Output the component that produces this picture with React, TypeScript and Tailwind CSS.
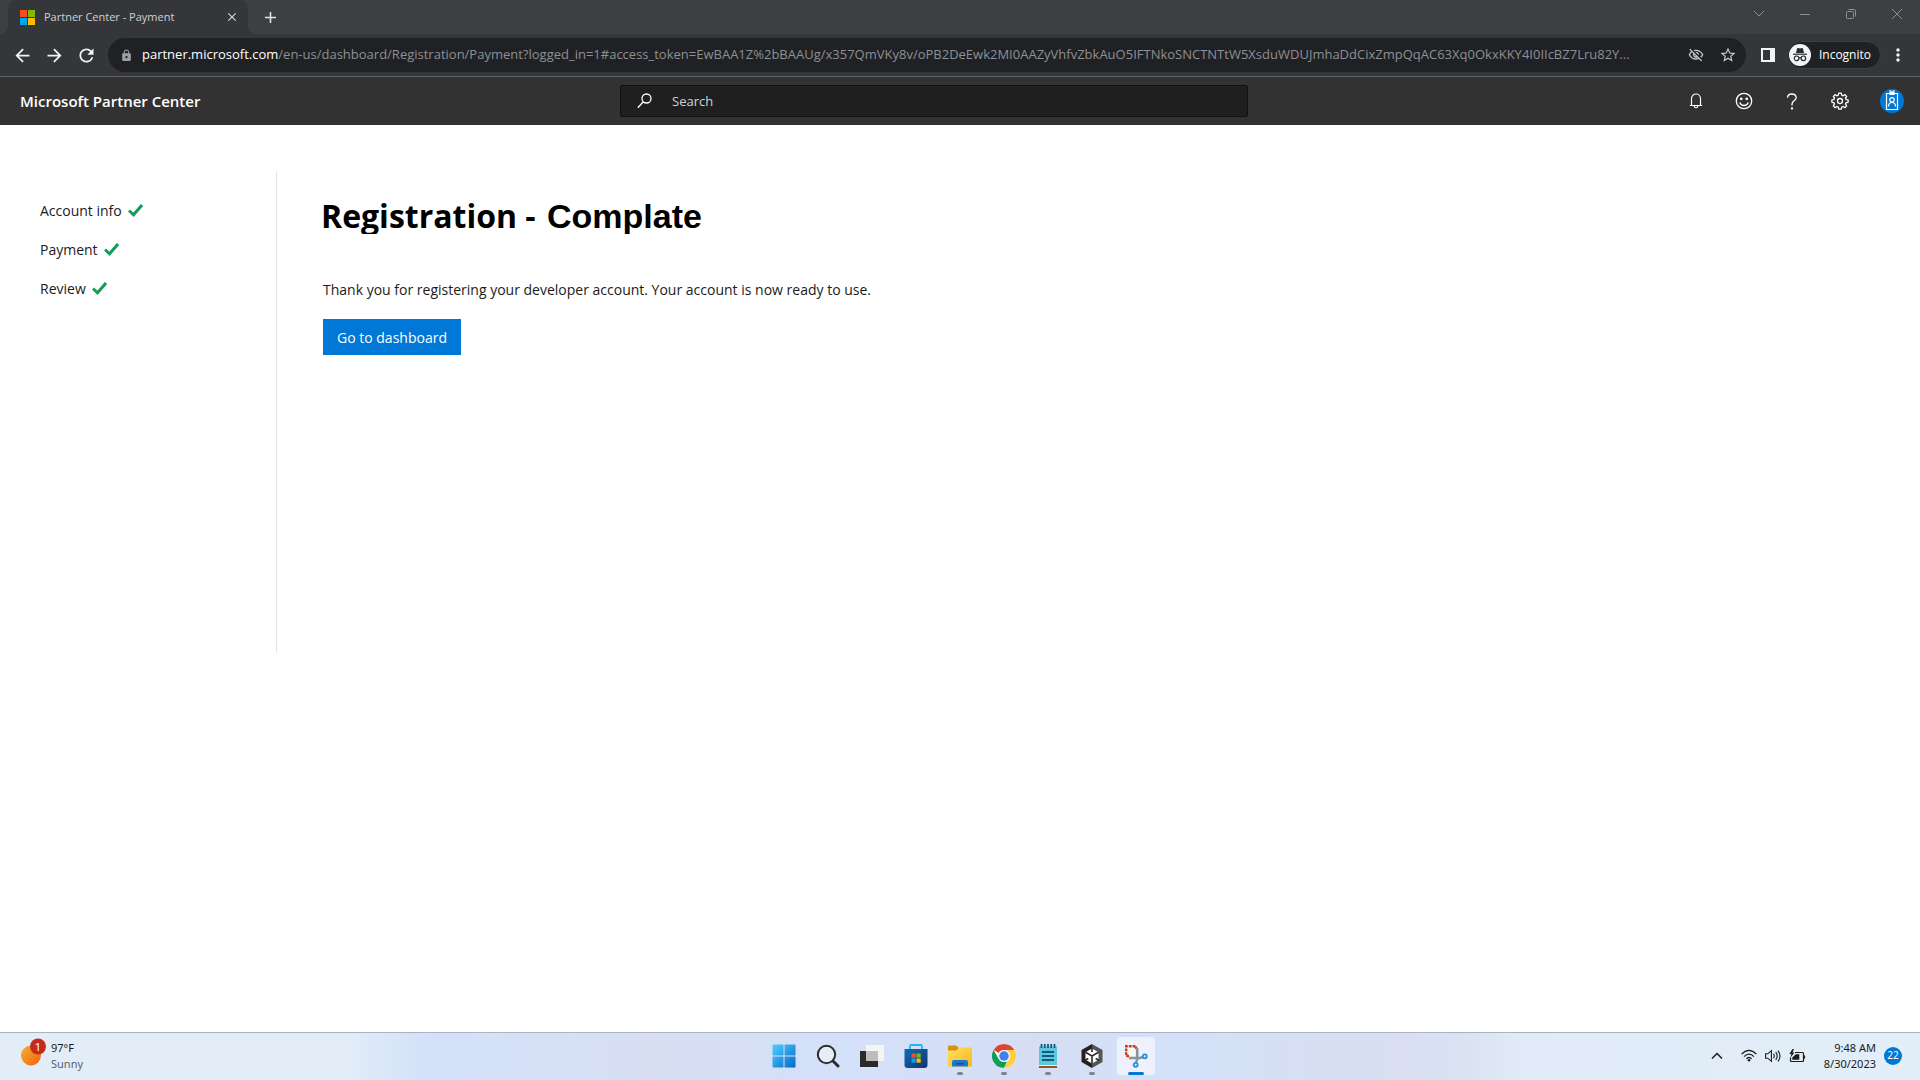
import React from "react";
import {
  MdArrowBack,
  MdArrowForward,
  MdRefresh,
  MdLock,
  MdOutlineVisibilityOff,
  MdStarBorder,
  MdMoreVert,
  MdAdd,
  MdClose,
} from "react-icons/md";

const URL_HOST = "partner.microsoft.com";
const URL_REST =
  "/en-us/dashboard/Registration/Payment?logged_in=1#access_token=EwBAA1Z%2bBAAUg/x357QmVKy8v/oPB2DeEwk2MI0AAZyVhfvZbkAuO5IFTNkoSNCTNTtW5XsduWDUJmhaDdCixZmpQqAC63Xq0OkxKKY4I0IIcBZ7Lru82Y...";

function IconButton({ label, className, children }: { label: string; className: string; children: React.ReactNode }) {
  return (
    <button type="button" aria-label={label} className={`flex shrink-0 items-center justify-center ${className}`}>
      {children}
    </button>
  );
}

function MicrosoftLogo() {
  return (
    <svg className="h-[15px] w-[15px] shrink-0" viewBox="0 0 15 15" aria-hidden="true">
      <path fill="#f25022" d="M0 0h7v7H0z" />
      <path fill="#7fba00" d="M8 0h7v7H8z" />
      <path fill="#00a4ef" d="M0 8h7v7H0z" />
      <path fill="#ffb900" d="M8 8h7v7H8z" />
    </svg>
  );
}

function TabStrip() {
  return (
    <div className="flex h-[34px] items-stretch bg-[#3c4043]">
      <div className="flex w-2 items-end bg-[#35363a]">
        <div className="h-full w-full rounded-br-lg bg-[#3c4043]" />
      </div>
      <div className="bg-[#3c4043]">
        <div className="flex h-full w-60 items-center rounded-t-lg bg-[#35363a] pr-2 pl-3">
          <MicrosoftLogo />
          <span className="ml-[9px] flex-1 truncate text-[11px] text-[#d0d1d3]">Partner Center - Payment</span>
          <IconButton label="Close tab" className="h-4 w-4 text-[#d5d7da]">
            <MdClose size={14} />
          </IconButton>
        </div>
      </div>
      <div className="w-2 bg-[#35363a]">
        <div className="h-full w-full rounded-bl-lg bg-[#3c4043]" />
      </div>
      <IconButton label="New tab" className="w-7 text-[#e0e2e4]">
        <MdAdd size={19} />
      </IconButton>
      <div className="ml-auto flex h-7 text-[#8b8e91]">
        <IconButton label="Search tabs" className="w-[46px]">
          <svg width="12" height="8" viewBox="0 0 12 8" fill="none" stroke="currentColor">
            <path d="M1 1l5 5 5-5" />
          </svg>
        </IconButton>
        <IconButton label="Minimize" className="w-[46px]">
          <svg width="10" height="10" viewBox="0 0 10 10" stroke="currentColor">
            <path d="M0 5.500h10" />
          </svg>
        </IconButton>
        <IconButton label="Restore" className="w-[46px]">
          <svg width="10" height="10" viewBox="0 0 10 10" fill="none" stroke="currentColor">
            <rect x=".5" y="2.500" width="7" height="7" rx="1" />
            <path d="M2.500.5H8q1.500 0 1.500 1.500v5.500" />
          </svg>
        </IconButton>
        <IconButton label="Close window" className="w-[46px]">
          <svg width="10" height="10" viewBox="0 0 10 10" stroke="currentColor">
            <path d="M0 0l10 10M10 0L0 10" />
          </svg>
        </IconButton>
      </div>
    </div>
  );
}

function IncognitoIcon() {
  return (
    <svg className="h-[22px] w-[22px] shrink-0" viewBox="0 0 22 22" aria-hidden="true">
      <circle cx="11" cy="11" r="11" fill="#f1f3f4" />
      <path fill="#292a2d" d="M7 9l1-4.200q.3-1 1.200-.7l1.800.5 1.800-.5q.9-.3 1.200.7L15 9z" />
      <path stroke="#292a2d" strokeWidth="1.200" d="M4 10.200h14" />
      <g fill="none" stroke="#292a2d" strokeWidth="1.200">
        <circle cx="7.600" cy="14.300" r="2.300" />
        <circle cx="14.400" cy="14.300" r="2.300" />
        <path d="M9.900 14q1.100-.8 2.200 0" />
      </g>
    </svg>
  );
}

function Toolbar() {
  return (
    <div className="flex h-[43px] items-center border-b border-[#5f6165] bg-[#35363a] pl-[6px]">
      <IconButton label="Back" className="h-8 w-8 text-[#f1f3f4]">
        <MdArrowBack size={21} />
      </IconButton>
      <IconButton label="Forward" className="h-8 w-8 text-[#f1f3f4]">
        <MdArrowForward size={21} />
      </IconButton>
      <IconButton label="Reload" className="h-8 w-8 text-[#f1f3f4]">
        <MdRefresh size={21} />
      </IconButton>
      <div className="ml-[6px] flex h-[34px] min-w-0 flex-1 items-center rounded-full bg-[#202124] pr-[2px] pl-3">
        <MdLock size={13} className="shrink-0 text-[#9aa0a6]" />
        <div
          role="textbox"
          aria-label="Address"
          tabIndex={0}
          className="ml-[9px] min-w-0 flex-1 truncate text-[13px] text-[#8d9094]"
        >
          <span className="text-white">{URL_HOST}</span>
          {URL_REST}
        </div>
        <IconButton label="Third-party cookies blocked" className="h-8 w-8 text-[#c4c7ca]">
          <MdOutlineVisibilityOff size={16} />
        </IconButton>
        <IconButton label="Bookmark this tab" className="h-8 w-8 text-[#c4c7ca]">
          <MdStarBorder size={18} />
        </IconButton>
      </div>
      <IconButton label="Side panel" className="ml-[6px] h-8 w-8">
        <svg width="14" height="14" viewBox="0 0 14 14">
          <path fill="#f1f3f4" fillRule="evenodd" d="M0 0h14v14H0zM2 2v10h7V2z" />
        </svg>
      </IconButton>
      <button
        type="button"
        className="ml-[3px] flex h-[28px] shrink-0 items-center gap-2 rounded-full border border-[#3c4043] bg-[#202124] pr-[9px] pl-[1px] text-[12px] text-white"
      >
        <IncognitoIcon />
        Incognito
      </button>
      <IconButton label="Menu" className="mr-[6px] ml-px h-8 w-8 text-[#f1f3f4]">
        <MdMoreVert size={20} />
      </IconButton>
    </div>
  );
}

function PortalHeader() {
  return (
    <header className="grid h-12 grid-cols-[620fr_628fr_672fr] items-center bg-[#323232] text-white">
      <a href="#home" className="pl-5 text-[15px] font-semibold">
        Microsoft Partner Center
      </a>
      <label className="flex h-8 items-center rounded-[2px] border border-[#111111] bg-[#1f1f1f] pl-4">
        <svg className="shrink-0" width="15" height="16" viewBox="0 0 15 16" fill="none" stroke="#fff" strokeWidth="1.300">
          <circle cx="9.500" cy="5.500" r="4.500" />
          <path d="M6.300 8.700L.8 14.800" />
        </svg>
        <input
          type="search"
          aria-label="Search"
          placeholder="Search"
          className="ml-5 h-6 min-w-0 flex-1 bg-transparent text-[13px] outline-none placeholder:text-[#d2d2d2]"
        />
      </label>
      <div className="flex items-center justify-end pr-1">
        <IconButton label="Notifications" className="h-12 w-12">
          <svg width="14" height="16" viewBox="0 0 14 16" fill="none" stroke="#fff" strokeWidth="1.200">
            <path d="M.8 12.500h12.400M2.500 12.500V5.500a4.500 4.500 0 0 1 9 0v7M5.200 13q.2 1.700 1.800 1.700T8.800 13" />
          </svg>
        </IconButton>
        <IconButton label="Feedback" className="h-12 w-12">
          <svg width="18" height="18" viewBox="0 0 18 18" fill="none" stroke="#fff" strokeWidth="1.300">
            <circle cx="9" cy="9" r="7.700" />
            <path d="M4.800 10.500q1 3 4.200 3t4.200-3" />
            <circle cx="6.300" cy="6.800" r=".7" fill="#fff" />
            <circle cx="11.700" cy="6.800" r=".7" fill="#fff" />
          </svg>
        </IconButton>
        <IconButton label="Help" className="h-12 w-12">
          <svg width="12" height="17" viewBox="0 0 12 17" fill="none" stroke="#fff" strokeWidth="1.300">
            <path d="M1.500 4.700Q1.700 1 5.800 1t4.400 3.700c0 3-4.200 3.300-4.200 6.300v1.500" />
            <circle cx="6" cy="15.500" r=".5" fill="#fff" />
          </svg>
        </IconButton>
        <IconButton label="Settings" className="h-12 w-12">
          <svg width="18" height="18" viewBox="-9 -9 18 18" fill="none" stroke="#fff" strokeWidth="1.300" strokeLinejoin="round">
            <path d="M-1.300-7.800h2.600l.4 2 1.500.6 1.700-1.200 1.800 1.800-1.200 1.600.6 1.600 2 .3v2.400l-2 .4-.6 1.500 1.200 1.700-1.800 1.800-1.700-1.200-1.500.6-.4 2h-2.600l-.4-2-1.500-.6-1.700 1.200-1.800-1.800 1.200-1.700-.6-1.500-2-.4v-2.400l2-.3.6-1.600-1.200-1.600 1.800-1.800 1.700 1.200 1.500-.6z" />
            <circle r="2.500" />
          </svg>
        </IconButton>
        <IconButton label="Account" className="ml-1 h-12 w-12">
          <svg width="24" height="24" viewBox="0 0 24 24" fill="none" stroke="#fff" strokeWidth="1.200">
            <circle cx="12" cy="12" r="12" fill="#0078d4" stroke="none" />
            <path d="M6.500 4.500h11v16h-11zM9.500 1.500l2.500 2 2.500-2M10 5.500h4v-2h-4zM8.500 17.500q0-4 3.500-4t3.500 4" />
            <circle cx="12" cy="10.800" r="2.200" />
          </svg>
        </IconButton>
      </div>
    </header>
  );
}

const steps = ["Account info", "Payment", "Review"];

function Main() {
  return (
    <main className="flex flex-1 items-start bg-white pt-[46px] text-black">
      <nav aria-label="Registration steps" className="h-[482px] w-[277px] shrink-0 border-r border-[#e6e6e6] pt-[27px] pl-10">
        <ol className="flex flex-col gap-[15px]">
          {steps.map((step) => (
            <li key={step} className="flex h-6 items-center text-[14px] text-[#1b1b1b]">
              <a href={`#${step}`}>{step}</a>
              <svg className="ml-[6px]" width="15" height="13" viewBox="0 0 15 13" fill="none" stroke="#149c5a" strokeWidth="3" role="img" aria-label="Complete">
                <path d="M1 6.500l4.500 4.300L14 1" />
              </svg>
            </li>
          ))}
        </ol>
      </nav>
      <section className="flex flex-col items-start pl-11">
        <h1 className="mt-[22px] flex h-[41px] items-start gap-[3px] overflow-hidden text-[32px] leading-[46px] font-bold whitespace-pre">
          Registration - <span className="font-['Liberation_Sans'] text-[34px]">Complate</span>
        </h1>
        <div className="pl-[2px]">
          <p className="mt-11 text-[14px] leading-6 text-[#1b1b1b]">
            Thank you for registering your developer account. Your account is now ready to use.
          </p>
          <button type="button" className="mt-[17px] h-9 bg-[#0078d7] px-[14px] text-[14px] text-white">
            Go to dashboard
          </button>
        </div>
      </section>
    </main>
  );
}

function StartIcon() {
  return (
    <svg width="24" height="24" viewBox="0 0 24 24">
      <defs>
        <linearGradient id="win" x1="0" y1="0" x2="1" y2="1">
          <stop offset="0" stopColor="#4fd0ff" />
          <stop offset="1" stopColor="#0568c9" />
        </linearGradient>
      </defs>
      <path fill="url(#win)" d="M1 .5h10.500v11H.5V1zM12.500.5H23l.5.5v10.500h-11zM.5 12.500h11v11H1l-.5-.5zM12.500 12.500h11V23l-.5.500H12.500z" />
    </svg>
  );
}

function SearchIcon() {
  return (
    <svg width="24" height="24" viewBox="0 0 24 24" fill="none" stroke="#2b2b2b">
      <circle cx="10.500" cy="10.500" r="8.700" strokeWidth="2" fill="#e6ecf8" />
      <path strokeWidth="3" strokeLinecap="round" d="M17.500 17.500l4.500 4.500" />
    </svg>
  );
}

function TaskViewIcon() {
  return (
    <svg width="24" height="24" viewBox="0 0 24 24">
      <path fill="#2a2a2a" d="M0 7h18v16H0z" />
      <path fill="#f5f5f5" d="M6 1h18v16H6z" />
      <path fill="#bdbdbd" d="M6 7h12v10H6z" />
    </svg>
  );
}

function StoreIcon() {
  return (
    <svg width="24" height="24" viewBox="0 0 24 24">
      <defs>
        <linearGradient id="store" x1="0" y1="0" x2="1" y2="1">
          <stop offset="0" stopColor="#0f6cb8" />
          <stop offset="1" stopColor="#17336b" />
        </linearGradient>
      </defs>
      <path fill="none" stroke="#1fb6f5" strokeWidth="1.800" d="M6 6V2q0-1 1-1h10q1 0 1 1v4" />
      <path fill="url(#store)" d="M.5 5h23v16q0 3-3 3h-17q-3 0-3-3z" />
      <path fill="#f25022" d="M7.500 9.500h4.200v4.200H7.500z" />
      <path fill="#7fba00" d="M12.500 9.500h4.200v4.200h-4.200z" />
      <path fill="#00a4ef" d="M7.500 14.500h4.200v4.200H7.500z" />
      <path fill="#ffb900" d="M12.500 14.500h4.200v4.200h-4.200z" />
    </svg>
  );
}

function ExplorerIcon() {
  return (
    <svg width="24" height="24" viewBox="0 0 24 24">
      <defs>
        <linearGradient id="folder" x1="0" y1="0" x2="1" y2="1">
          <stop offset="0" stopColor="#ffdf6b" />
          <stop offset="1" stopColor="#f9b714" />
        </linearGradient>
      </defs>
      <path fill="#d89408" d="M0 2.500Q0 1.500 1 1.500h7l2.500 2v6H0z" />
      <path fill="url(#folder)" d="M0 6.500h8.500l2.500-3h12q1 0 1 1V21q0 1.500-1.500 1.500h-21Q0 22.500 0 21z" />
      <path fill="#1a78cf" d="M4 22.500V18q0-2 2-2h12q2 0 2 2v4.500z" />
      <path fill="#0d4f98" d="M8 19h8v1.500H8z" />
    </svg>
  );
}

function ChromeIcon() {
  return (
    <svg width="24" height="24" viewBox="0 0 48 48">
      <circle cx="24" cy="24" r="24" fill="#fff" />
      <path fill="#db4437" d="M24 0A24 24 0 0 1 44.800 12H24A12 12 0 0 0 13.600 18L3.200 12A24 24 0 0 1 24 0z" />
      <path fill="#0f9d58" d="M3.200 12L13.600 30A12 12 0 0 0 24 36l6.200-.9L24 48A24 24 0 0 1 3.200 12z" />
      <path fill="#ffcd40" d="M24 12h20.800A24 24 0 0 1 24 48l10.400-18A12 12 0 0 0 24 12z" />
      <circle cx="24" cy="24" r="12" fill="#f1f1f1" />
      <circle cx="24" cy="24" r="9.500" fill="#3f7fee" />
    </svg>
  );
}

function NotepadIcon() {
  return (
    <svg width="20" height="24" viewBox="0 0 20 24">
      <path fill="#a3510f" d="M1 21h18v3H1z" />
      <path fill="#f2efe9" d="M1 20h18v2H1z" />
      <path fill="#5bc8e0" d="M1 2.500h18V21H1z" />
      <path stroke="#12597d" strokeWidth="1.800" d="M3.500 0v4M6.800 0v4M10 0v4M13.200 0v4M16.500 0v4M4 8h12M4 12h12M4 16h12" />
    </svg>
  );
}

function UnityIcon() {
  return (
    <svg width="22" height="24" viewBox="0 0 22 24">
      <path fill="#222" d="M11 0v24L.5 18V6z" />
      <path fill="#555" d="M11 0l10.500 6v12L11 24z" />
      <path fill="#fff" d="M11 4.500l6.500 3.800v7.500L11 19.500l-6.500-3.700V8.300z" />
      <path stroke="#2b2b2b" strokeWidth="1.600" fill="none" d="M11 12v7.500M11 12L4.500 8.300M11 12l6.500-3.700M11 3.500V8M3.800 16.500l3.500-2M18.200 16.500l-3.500-2" />
    </svg>
  );
}

function SnippingIcon() {
  return (
    <svg width="24" height="24" viewBox="0 0 24 24" fill="none">
      <path fill="#f8f8f8" d="M3 3h9v9H3z" />
      <path stroke="#cf3a10" strokeWidth="2.400" strokeDasharray="2.800 1" d="M5 12H2.200V2.200H12V5" />
      <path stroke="#8b9299" strokeWidth="2.600" d="M13.200 4v11l-1 3.500M5 14h11l3-1" />
      <circle cx="11.700" cy="20.800" r="2" stroke="#1d93dd" strokeWidth="1.800" />
      <circle cx="20.800" cy="12.300" r="2" stroke="#1d93dd" strokeWidth="1.800" />
    </svg>
  );
}

const apps = [
  { name: "Start", icon: <StartIcon />, state: "idle" },
  { name: "Search", icon: <SearchIcon />, state: "idle" },
  { name: "Task view", icon: <TaskViewIcon />, state: "idle" },
  { name: "Microsoft Store", icon: <StoreIcon />, state: "idle" },
  { name: "File Explorer", icon: <ExplorerIcon />, state: "open" },
  { name: "Google Chrome", icon: <ChromeIcon />, state: "open" },
  { name: "Notepad", icon: <NotepadIcon />, state: "open" },
  { name: "Unity Hub", icon: <UnityIcon />, state: "open" },
  { name: "Snipping Tool", icon: <SnippingIcon />, state: "active" },
];

function Taskbar() {
  return (
    <footer className="grid h-12 grid-cols-[1fr_auto_1fr] items-center border-t border-[#a9b4c2] bg-[linear-gradient(90deg,#e2edf8_0%,#e2edf8_18%,#d3e2f9_22%,#d6e0f6_30%,#d9def2_34%,#d3e1f9_44%,#d6def5_54%,#d3e2f9_62%,#d8def1_70%,#dae1f1_76%,#e0ebf7_79%,#e2eef8_100%)] pb-[2px] font-['Noto_Sans'] text-[#1b1b1b]">
      <button type="button" className="flex items-center pl-5 text-left">
        <svg width="26" height="36" viewBox="0 -4 26 36" aria-hidden="true">
          <defs>
            <linearGradient id="sun" x1="0" y1="0" x2="1" y2="1">
              <stop offset="0" stopColor="#f2b136" />
              <stop offset="1" stopColor="#f0620c" />
            </linearGradient>
          </defs>
          <circle cx="11" cy="13.500" r="10" fill="url(#sun)" />
          <circle cx="18" cy="4.500" r="8" fill="#c42b1c" />
          <text x="18" y="8.500" textAnchor="middle" fill="#fff" fontSize="11">1</text>
        </svg>
        <span className="ml-[5px] text-[11px] leading-4">
          97°F
          <span className="block text-[#5b6168]">Sunny</span>
        </span>
      </button>
      <div className="flex items-center gap-[6px]">
        {apps.map((app) => (
          <button
            key={app.name}
            type="button"
            aria-label={app.name}
            className={
              app.state === "active"
                ? "flex h-[38px] w-[38px] flex-col items-center justify-end rounded bg-[#eef1fb]"
                : "flex h-[38px] w-[38px] flex-col items-center justify-end rounded"
            }
          >
            {app.icon}
            <span
              className={
                app.state === "active"
                  ? "mt-1 h-[3px] w-4 rounded-full bg-[#0078d4]"
                  : app.state === "open"
                    ? "mt-1 h-[3px] w-[6px] rounded-full bg-[#80848c]"
                    : "mt-1 h-[3px] w-[6px]"
              }
            />
          </button>
        ))}
      </div>
      <div className="flex items-center justify-end pr-[18px]">
        <IconButton label="Show hidden icons" className="mr-3 h-8 w-6">
          <svg width="12" height="8" viewBox="0 0 12 8" fill="none" stroke="#1b1b1b" strokeWidth="1.500">
            <path d="M1 6.500l5-5 5 5" />
          </svg>
        </IconButton>
        <button type="button" aria-label="Network, sound, battery" className="flex items-center gap-2">
          <svg width="16" height="13" viewBox="0 0 16 13" fill="none" stroke="#1b1b1b" strokeWidth="1.200">
            <path d="M.6 5.200q7.400-7.600 14.800 0M3 7.600q5-5 10 0M5.300 9.800q2.700-2.600 5.400 0" />
            <circle cx="8" cy="11.300" r="1.300" fill="#1b1b1b" stroke="none" />
          </svg>
          <svg width="16" height="14" viewBox="0 0 16 14" fill="none" stroke="#1b1b1b" strokeWidth="1.100">
            <path d="M.6 4.800h2.200L6.400 1.600v10.800L2.800 9.200H.6zM8.500 4.800q1.500 2.200 0 4.400M10.700 3.200q3 3.800 0 7.600M12.900 1.600q4.200 5.400 0 10.800" />
          </svg>
          <svg width="17" height="14" viewBox="0 0 17 14" fill="none" stroke="#1b1b1b" strokeWidth="1.200">
            <path d="M6 3.500h7.500q1 0 1 1v7q0 1-1 1h-11q-1 0-1-1V8.500M15.500 6.500v3" />
            <path fill="#1b1b1b" stroke="none" d="M3.300 10.800V8.500L6.800 5.300h3.500v5.500zM3.500 0L.3 5h2L1.500 8.500 5.500 3.500h-2L5 0z" />
          </svg>
        </button>
        <button type="button" className="ml-4 flex items-center">
          <span className="w-[54px] text-right text-[11px] leading-4 whitespace-nowrap">
            9:48 AM
            <br />
            8/30/2023
          </span>
          <span className="ml-2 flex h-[18px] w-[18px] items-center justify-center rounded-full bg-[#0078d4] text-[10px] text-white">
            22
          </span>
        </button>
      </div>
    </footer>
  );
}

export default function App() {
  return (
    <div className="flex min-h-screen flex-col font-['Open_Sans',sans-serif]">
      <TabStrip />
      <Toolbar />
      <PortalHeader />
      <Main />
      <Taskbar />
    </div>
  );
}
